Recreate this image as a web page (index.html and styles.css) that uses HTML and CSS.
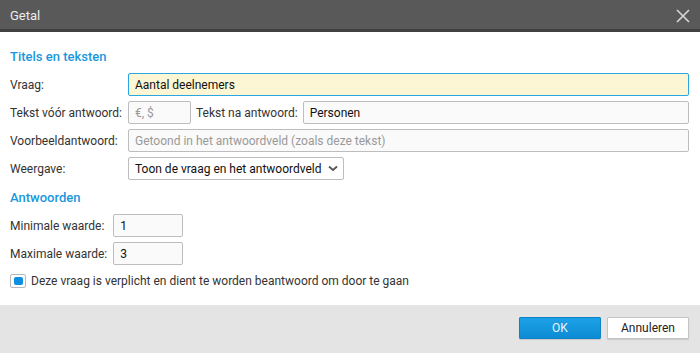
FILE: index.html
```html
<!DOCTYPE html>
<html lang="nl">
<head>
    <meta charset="utf-8">
    <title>Getal</title>
    <link rel="stylesheet" href="styles.css">
</head>
<body>
    <div class="dialog">
        <div class="titlebar">
            <span class="title">Getal</span>
            <svg class="close" width="14" height="14" viewBox="0 0 14 14">
                <path d="M1 1 L13 13 M13 1 L1 13" stroke="#d8d8d8" stroke-width="1.6" fill="none"/>
            </svg>
        </div>

        <div class="content">
            <h2 class="section">Titels en teksten</h2>
            <div class="form">
                <label>Vraag:</label>
                <input class="field focus" type="text" value="Aantal deelnemers">

                <label>Tekst vóór antwoord:</label>
                <div class="pair">
                    <input class="field small" type="text" placeholder="€, $">
                    <label>Tekst na antwoord:</label>
                    <input class="field grow" type="text" value="Personen">
                </div>

                <label>Voorbeeldantwoord:</label>
                <input class="field" type="text" placeholder="Getoond in het antwoordveld (zoals deze tekst)">

                <label>Weergave:</label>
                <div>
                    <div class="select">
                        <span>Toon de vraag en het antwoordveld</span>
                        <svg width="10" height="7" viewBox="0 0 10 7">
                            <path d="M1 1.5 L5 5 L9 1.5" stroke="#555" stroke-width="1.8" fill="none"/>
                        </svg>
                    </div>
                </div>
            </div>

            <h2 class="section second">Antwoorden</h2>
            <div class="form">
                <label>Minimale waarde:</label>
                <div><input class="field num" type="text" value="1"></div>

                <label>Maximale waarde:</label>
                <div><input class="field num" type="text" value="3"></div>
            </div>

            <div class="check">
                <span class="box"><span class="tick"></span></span>
                <span>Deze vraag is verplicht en dient te worden beantwoord om door te gaan</span>
            </div>
        </div>

        <div class="footer">
            <button class="btn primary">OK</button>
            <button class="btn">Annuleren</button>
        </div>
    </div>
</body>
</html>
```

FILE: styles.css
```css
* { margin: 0; padding: 0; box-sizing: border-box; }
body {
    font-family: Roboto, "Liberation Sans", sans-serif;
    font-size: 12px;
    color: #333;
    background: #fff;
}
.dialog {
    width: 700px;
    height: 353px;
    display: flex;
    flex-direction: column;
}
.titlebar {
    height: 32px;
    background: #595959;
    border-bottom: 3px solid #404040;
    display: flex;
    align-items: center;
    justify-content: space-between;
    padding: 0 10px 0 10px;
}
.title {
    color: #ececec;
    font-size: 13px;
    padding-top: 2px;
}
.close { margin-top: 3px; }

.content {
    flex: 1;
    padding: 17px 11px 0 10px;
}
.section {
    color: #1b97dd;
    font-size: 13px;
    font-weight: 500;
    line-height: 16px;
    margin-bottom: 8px;
}
.section.second { margin-top: 10px; }

.form {
    display: grid;
    grid-template-columns: auto 1fr;
    column-gap: 6px;
    row-gap: 5px;
    align-items: center;
}
.form label { white-space: nowrap; }
.field {
    height: 23px;
    border: 1px solid #bdbdbd;
    border-radius: 2px;
    background: #fafafa;
    font-family: inherit;
    font-size: 12px;
    color: #111;
    padding: 0 6px;
    outline: none;
    width: 100%;
}
.field::placeholder { color: #999; }
.field.focus {
    background: #fdf6d4;
    border-color: #2aa6e0;
}
.pair {
    display: flex;
    align-items: center;
    gap: 5px;
}
.field.small { width: 63px; flex: none; }
.field.grow { flex: 1; }
.field.num { width: 70px; }

.select {
    display: inline-flex;
    align-items: center;
    gap: 6px;
    height: 23px;
    border: 1px solid #bdbdbd;
    border-radius: 2px;
    background: #fff;
    padding: 0 5px 0 6px;
    color: #111;
}

.check {
    display: flex;
    align-items: center;
    gap: 5px;
    margin-top: 9px;
}
.box {
    width: 16px;
    height: 14px;
    border: 1px solid #b8b8b8;
    border-radius: 2px;
    background: #fff;
    display: flex;
    align-items: center;
    justify-content: center;
}
.tick {
    width: 9px;
    height: 8px;
    border-radius: 2px;
    background: #0b8fe0;
}

.footer {
    height: 48px;
    background: #e4e4e4;
    display: flex;
    justify-content: flex-end;
    align-items: flex-start;
    gap: 6px;
    padding: 12px 11px 0 0;
}
.btn {
    width: 82px;
    height: 22px;
    font-family: inherit;
    font-size: 12px;
    color: #222;
    background: #fff;
    border: 1px solid #c4c4c4;
    border-radius: 1px;
    box-shadow: 0 1px 1px rgba(0,0,0,0.12);
}
.btn.primary {
    background: linear-gradient(#1da1e6, #0c8bd3);
    border-color: #0d82c8;
    color: #e8f4fc;
}
```
